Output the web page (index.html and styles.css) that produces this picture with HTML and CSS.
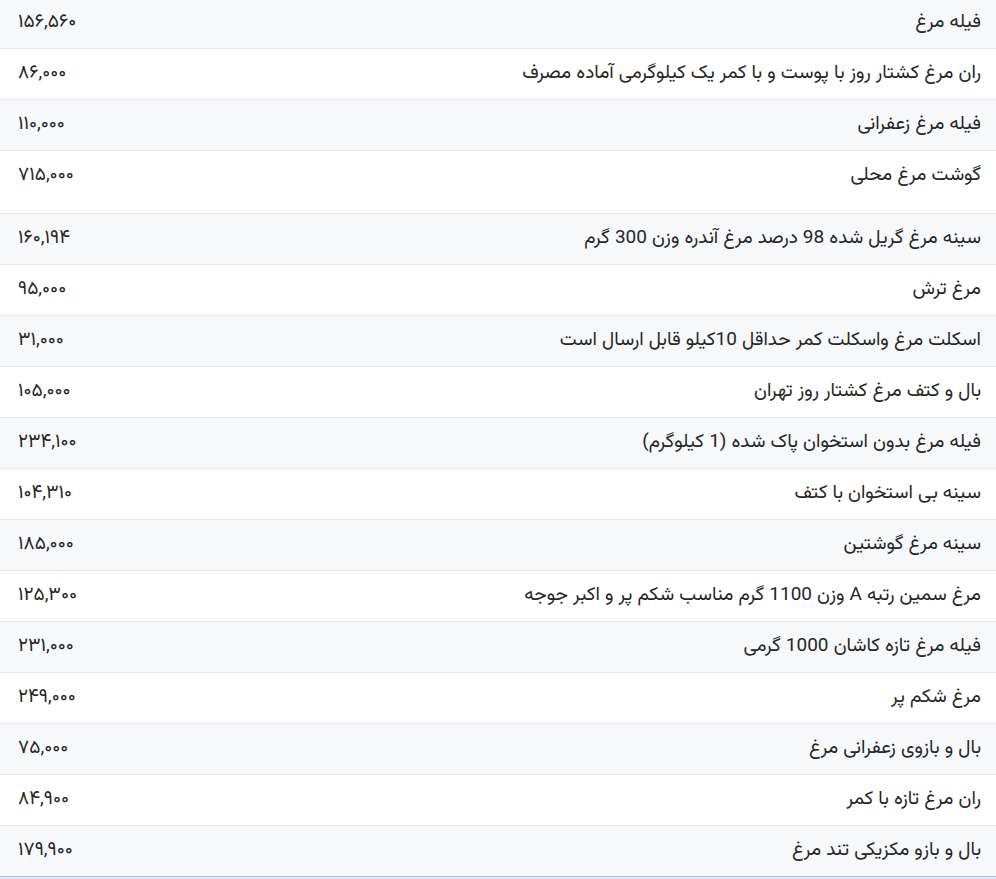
FILE: index.html
```html
<!DOCTYPE html>
<html lang="fa" dir="rtl">
<head>
<meta charset="utf-8">
<link rel="stylesheet" href="styles.css">
</head>
<body>
<div class="wrap">
<table class="prices">
<tbody>
<tr><td class="name">فیله مرغ</td><td class="price">۱۵۶,۵۶۰</td></tr>
<tr><td class="name">ران مرغ کشتار روز با پوست و با کمر یک کیلوگرمی آماده مصرف</td><td class="price">۸۶,۰۰۰</td></tr>
<tr><td class="name">فیله مرغ زعفرانی</td><td class="price">۱۱۰,۰۰۰</td></tr>
<tr class="tall"><td class="name">گوشت مرغ محلی</td><td class="price">۷۱۵,۰۰۰</td></tr>
<tr><td class="name">سینه مرغ گریل شده 98 درصد مرغ آندره وزن 300 گرم</td><td class="price">۱۶۰,۱۹۴</td></tr>
<tr><td class="name">مرغ ترش</td><td class="price">۹۵,۰۰۰</td></tr>
<tr><td class="name">اسکلت مرغ واسکلت کمر حداقل 10کیلو قابل ارسال است</td><td class="price">۳۱,۰۰۰</td></tr>
<tr><td class="name">بال و کتف مرغ کشتار روز تهران</td><td class="price">۱۰۵,۰۰۰</td></tr>
<tr><td class="name">فیله مرغ بدون استخوان پاک شده (1 کیلوگرم)</td><td class="price">۲۳۴,۱۰۰</td></tr>
<tr><td class="name">سینه بی استخوان با کتف</td><td class="price">۱۰۴,۳۱۰</td></tr>
<tr><td class="name">سینه مرغ گوشتین</td><td class="price">۱۸۵,۰۰۰</td></tr>
<tr><td class="name">مرغ سمین رتبه A وزن 1100 گرم مناسب شکم پر و اکبر جوجه</td><td class="price">۱۲۵,۳۰۰</td></tr>
<tr><td class="name">فیله مرغ تازه کاشان 1000 گرمی</td><td class="price">۲۳۱,۰۰۰</td></tr>
<tr><td class="name">مرغ شکم پر</td><td class="price">۲۴۹,۰۰۰</td></tr>
<tr><td class="name">بال و بازوی زعفرانی مرغ</td><td class="price">۷۵,۰۰۰</td></tr>
<tr><td class="name">ران مرغ تازه با کمر</td><td class="price">۸۴,۹۰۰</td></tr>
<tr><td class="name">بال و بازو مکزیکی تند مرغ</td><td class="price">۱۷۹,۹۰۰</td></tr>
</tbody>
</table>
<div class="foot"></div>
</div>
</body>
</html>
```
FILE: styles.css
```css
html, body {
  margin: 0;
  padding: 0;
  background: #ffffff;
}
body {
  font-family: "Vazirmatn", "Noto Sans Arabic", "DejaVu Sans", sans-serif;
  color: #262626;
  font-size: 19px;
}
.wrap {
  margin-top: -2px;
}
.prices {
  width: 100%;
  border-collapse: collapse;
  direction: rtl;
}
.prices tr {
  border-bottom: 1px solid #e6e8ec;
}
.prices tr:nth-child(odd) {
  background: #f7f8fa;
}
.prices td {
  padding: 12px 15px 12px 15px;
  line-height: 26px;
  vertical-align: top;
}
.prices .name {
  text-align: right;
}
.prices .price {
  text-align: left;
  width: 150px;
  padding-left: 18px;
}
.prices tr.tall td {
  padding-bottom: 24px;
}
.prices tr:last-child {
  border-bottom: 1px solid #b9c3d6;
}
.foot {
  height: 4px;
  background: #e4eaf5;
}
```
